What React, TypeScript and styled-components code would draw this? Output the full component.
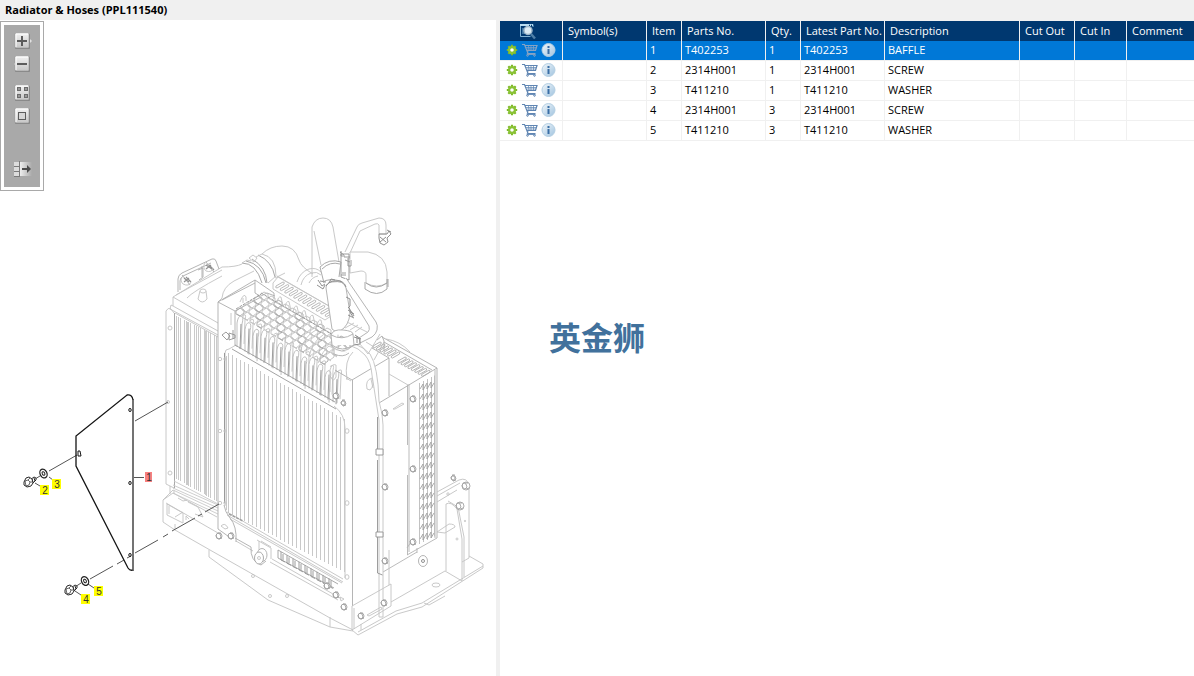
import React, { useState } from 'react';
import styled, { createGlobalStyle, css } from 'styled-components';

const GlobalStyle = createGlobalStyle`
  * { box-sizing: border-box; }
  body { margin: 0; background: #fff; }
`;

const Page = styled.div`
  position: relative;
  display: flex;
  flex-direction: column;
  min-height: 100vh;
  background: #fff;
  color: #000;
  font: 11px/16px 'Open Sans', 'Noto Sans', sans-serif;
`;

const TitleBar = styled.h1`
  margin: 0;
  height: 20px;
  padding: 0 5px;
  background: #f0f0f0;
  font-size: 11px;
  line-height: 20px;
  font-weight: 700;
  white-space: nowrap;
`;

const Split = styled.main`
  display: flex;
  flex: 1;
`;

const DrawingPane = styled.section`
  position: relative;
  flex: 496 1 0;
  min-width: 0;
`;

const Splitter = styled.div`
  flex: 0 0 4px;
  background: #f0f0f0;
`;

const ListPane = styled.section`
  flex: 694 1 0;
  min-width: 0;
  border-top: 1px solid #f0f0f0;
`;

/* Floating drawing tools */

const ToolBox = styled.div`
  position: absolute;
  top: 1px;
  left: 0;
  padding: 3px;
  border: 1px solid #a9a9a9;
  background: #fff;
`;

const ToolColumn = styled.div`
  display: flex;
  flex-direction: column;
  align-items: flex-start;
  width: 36px;
  padding: 8px 0 10px 10px;
  background: #a9a9a9;
`;

const ToolGroup = styled.div<{ $after?: number }>`
  display: flex;
  flex-direction: column;
  gap: 7px;
  margin-bottom: ${(p) => p.$after ?? 0}px;
`;

const IconButton = styled.button`
  display: flex;
  padding: 0;
  border: 0;
  background: none;
  cursor: pointer;
  svg { display: block; }
`;

/* Parts list */

const Table = styled.table`
  width: 100%;
  table-layout: fixed;
  border-collapse: separate;
  border-spacing: 0;
`;

const Col = styled.col<{ $w?: number }>`
  ${(p) => p.$w && css`width: ${p.$w}px;`}
`;

const HeadCell = styled.th`
  height: 20px;
  padding: 0 0 0 5px;
  border-right: 1px solid #f0f0f0;
  background: #003870;
  color: #fff;
  font-weight: 400;
  text-align: left;
  white-space: nowrap;
  overflow: hidden;
  &:last-child { border-right: 0; }
  svg { display: block; margin-left: 14px; }
`;

const Row = styled.tr<{ $selected: boolean }>`
  background: ${(p) => (p.$selected ? '#0078d7' : '#fff')};
  color: ${(p) => (p.$selected ? '#fff' : '#000')};
`;

const Cell = styled.td`
  height: 20px;
  padding: 0 0 2px 3px;
  border-right: 1px solid #f0f0f0;
  border-bottom: 1px solid #f0f0f0;
  white-space: nowrap;
  overflow: hidden;
  &:last-child { border-right: 0; }
`;

const Actions = styled.div`
  display: flex;
  align-items: center;
  gap: 3px;
  padding-left: 2px;
`;

const Brand = styled.div`
  position: absolute;
  top: 50%;
  left: 50%;
  transform: translate(-50%, -50%);
  padding-bottom: 4px;
  color: #41719c;
  font: 700 32px/32px 'Noto Sans CJK SC', sans-serif;
  white-space: nowrap;
  pointer-events: none;
`;

/* Icons */

const Tile = () => (
  <>
    <rect x="1" y="1" width="15" height="15" rx="1" fill="#868686" />
    <rect x="1" y="0" width="14" height="15" rx="1" fill="url(#tile)" stroke="#949494" strokeWidth="0.6" />
    <path d="M2 14V1h12" stroke="#fff" fill="none" />
  </>
);

const ZoomInIcon = () => (
  <svg width="18" height="16">
    <defs>
      <linearGradient id="tile" x1="0" y1="0" x2="0" y2="1">
        <stop offset="0" stopColor="#f2f2f2" />
        <stop offset="1" stopColor="#c6c6c6" />
      </linearGradient>
    </defs>
    <path d="M15 5l3 3-3 3z" fill="#e2e2e2" />
    <Tile />
    <path d="M8 3v10M3 8h10" stroke="#5c5c5c" strokeWidth="2" />
  </svg>
);

const ZoomOutIcon = () => (
  <svg width="18" height="16">
    <path d="M3 5L0 8l3 3z" fill="#e8e8e8" />
    <Tile />
    <path d="M3 8h10" stroke="#5c5c5c" strokeWidth="2" />
  </svg>
);

const TilesIcon = () => (
  <svg width="18" height="16">
    <Tile />
    {[[3.5, 2.5], [10.5, 2.5], [3.5, 9.5], [10.5, 9.5]].map(([x, y]) => (
      <rect key={`${x}-${y}`} x={x} y={y} width="3" height="3" fill="#999" stroke="#6c6c6c" />
    ))}
  </svg>
);

const FitIcon = () => (
  <svg width="18" height="16">
    <Tile />
    <rect x="4.5" y="4.5" width="7" height="7" fill="#d6d6d6" stroke="#5c5c5c" />
  </svg>
);

const TogglePanelIcon = () => (
  <svg width="18" height="16">
    <defs>
      <linearGradient id="fade">
        <stop offset="0" stopColor="#eee" />
        <stop offset="1" stopColor="#a9a9a9" />
      </linearGradient>
    </defs>
    <rect x="6" y="1" width="12" height="14" fill="url(#fade)" />
    <path d="M0 1h5v4H0zM0 6h5v4H0zM0 11h5v4H0z" fill="#dcdcdc" />
    <path d="M5.500 0v16M0 5.500h5M0 10.500h5M0 15.500h5" stroke="#7a7a7a" />
    <path d="M8 7h5V4l4 4-4 4V9H8z" fill="#4c4c4c" />
  </svg>
);

const GearIcon = () => (
  <svg width="13" height="16" viewBox="0 0 13 16">
    <g stroke="#7db928" strokeWidth="2.200">
      <path d="M7 2.800v10.400M1.800 8h10.400M3.300 4.300l7.400 7.400M10.700 4.300l-7.400 7.400" />
    </g>
    <circle cx="7" cy="8" r="3" fill="none" stroke="#8ac234" strokeWidth="2.200" />
    <circle cx="7" cy="8" r="1.800" fill="#fff" />
  </svg>
);

const CartIcon = ({ on }: { on: boolean }) => (
  <svg width="17" height="16" viewBox="0 0 17 16" fill="none" stroke={on ? '#86a3c4' : '#6086b3'}>
    <path d="M1 2.500h2.500L7 11.500h7.500M4 3.500h12L14.500 8.500H6" strokeWidth="1.200" />
    <path d="M5 5.500h10M6 7h9M7.500 4l.5 4.500M10 4v4.500M12.500 4v4.500" strokeWidth="0.9" opacity="0.8" />
    <path d="M7 9l-1 3.500h8.500" strokeWidth="0.9" />
    <circle cx="6.500" cy="13.500" r="0.8" />
    <circle cx="13.500" cy="13.500" r="0.8" />
  </svg>
);

const InfoIcon = () => (
  <svg width="15" height="16" viewBox="0 0 15 16">
    <defs>
      <linearGradient id="info" x1="0" y1="0" x2="1" y2="1">
        <stop offset="0" stopColor="#f2f7fb" />
        <stop offset="1" stopColor="#9fc3df" />
      </linearGradient>
    </defs>
    <circle cx="7.500" cy="8" r="6.500" fill="url(#info)" stroke="#b4cfe3" />
    <path d="M6.500 4h2v2h-2zM6.500 7h2v5h-2z" fill="#3a6ea5" />
  </svg>
);

const PreviewIcon = () => (
  <svg width="17" height="17" viewBox="0 0 17 17">
    <path d="M1.500 1v12.500h10M1 1.500h13V4" fill="none" stroke="#7fb2d4" />
    <path d="M1 2h13" stroke="#b9dcf0" strokeWidth="2" strokeDasharray="9 1 1 1" />
    <path d="M3 6h3M3 8h2M3 10h3" stroke="#7fb2d4" />
    <circle cx="9" cy="7.500" r="4" fill="#dcebf4" stroke="#9db6c8" strokeWidth="1.500" />
    <path d="M12 11l4 4.500" stroke="#4e7fa8" strokeWidth="2.500" />
  </svg>
);

/* Exploded view */

const range = (from: number, to: number, step: number) =>
  Array.from({ length: Math.floor((to - from) / step) + 1 }, (_, i) => from + i * step);

const Bolt = ({ x, y, r = 3 }: { x: number; y: number; r?: number }) => (
  <g stroke="#8c8c8c" fill="#fff" strokeWidth="0.9">
    <circle cx={x} cy={y} r={r} />
    <path d={`M${x - r} ${y - 1}l2-2 2 1 1 3-2 2-2-1zM${x - 1} ${y - 3}h3M${x} ${y + 3}l3-1`} fill="none" />
  </g>
);

const Callout = ({ x, y, n, fill = '#ffff00' }: { x: number; y: number; n: number; fill?: string }) => (
  <g>
    <rect x={x} y={y} width={n === 1 ? 7 : 9} height="10" fill={fill} shapeRendering="crispEdges" />
    <text x={x + (n === 1 ? 4 : 5)} y={y + 9} textAnchor="middle" fill="#333" fontFamily="Liberation Sans, sans-serif" fontSize="10">
      {n}
    </text>
  </g>
);

const Screw = ({ x, y }: { x: number; y: number }) => (
  <g stroke="#2a2a2a" fill="#fff">
    <path d={`M${x + 2} ${y - 2}l4-3 2 1v2l-4 4z`} />
    <path d={`M${x + 4} ${y - 3}l1 3M${x + 6} ${y - 4}l1 3`} />
    <path d={`M${x - 4} ${y}l2-4 3-1 3 2 1 4-2 3-4 1-3-2z`} />
    <path d={`M${x - 3} ${y - 1}l3-1 2 2-1 3-3 1zM${x} ${y - 2}l2-2M${x + 2} ${y}l2 0`} fill="none" strokeWidth="0.7" />
  </g>
);

const Washer = ({ x, y }: { x: number; y: number }) => (
  <g transform={`rotate(-25 ${x} ${y})`} stroke="#222" fill="#fff">
    <ellipse cx={x} cy={y} rx="3.400" ry="4.600" strokeWidth="1.300" />
    <ellipse cx={x} cy={y} rx="1.300" ry="1.900" />
  </g>
);

const vent = (x: number, y: number) => `M${x} ${y}l7-4q2 0 1 2l-7 4q-2 0-1-2`;

const RadiatorDrawing = styled.svg`
  display: block;
  width: 100%;
`;

const Drawing = () => (
  <RadiatorDrawing viewBox="0 20 496 656" preserveAspectRatio="xMinYMin meet" role="img" aria-label="Radiator and hoses exploded view">
    <g fill="none" stroke="#b4b4b4" strokeWidth="0.9" strokeLinejoin="round" opacity="0.8">
      {/* rear core and side strip */}
      <path d="M166 484V311q2-4 5-2l3 4M166 484l8 4M170 486v8" />
      <path d="M174.500 313v175" stroke="#888" />
      <circle cx="170" cy="328" r="2" />
      <circle cx="168" cy="402" r="1.500" />
      <circle cx="170" cy="473" r="2" />
      <g shapeRendering="crispEdges" stroke="#bebebe" strokeWidth="1">
        {range(176, 216, 2).filter((x) => x % 10 !== 2).map((x) => (
          <path key={x} d={`M${x + 0.5} ${Math.round(316 + (x - 176) * 0.5)}V${Math.round(479 + (x - 176) * 0.55)}`} />
        ))}
        {[187, 205].map((x) => (
          <path key={x} d={`M${x + 0.5} ${Math.round(316 + (x - 176) * 0.5)}V${Math.round(479 + (x - 176) * 0.55)}`} />
        ))}
      </g>
      {/* header tank */}
      <path d="M173 297v9l45 25M173 297l45 26M171 305l-1 4 48 26M173 306l-2-1M175 313l43 24" />
      <path d="M173 297l49-30q14 0 20-3M176 295l46-25M187 298q5-6 35-22M222 298q1-11 12-17l20-10M222 298l-4 4" />
      <path d="M178 292v-13q0-4 4-6l30-14q3-1 4 2l3 8M180 290v-9q0-3 3-5l28-13M202 266v11M182 275l8 10M206 262l8 10M198 270l5-2v9l-4 3" stroke="#999" />
      <path d="M184 278l5 4m-5 0l5-4m-3-1l5 5M206 265l6 4m-6 0l5-4m-2 0l5 5" stroke="#777" strokeWidth="1.200" />
      <path d="M183 276q-4 4 0 8 6 3 8-2M205 263q-3 4 1 8 6 2 7-3" />
      <path d="M200 291l-2 8q4 6 9 0l-1-8" fill="#fff" />
      <ellipse cx="203" cy="291" rx="3" ry="2" fill="#fff" />
      {/* inlet hose */}
      <path d="M242 263q14 0 20 20M246 261q16 3 20 22M252 259q14 8 15 24M258 255q14 6 17 22" stroke="#888" />
      <path d="M242 263l5-3 4 1M249 258l4-3 4 3-3 4zM256 257l6-3q14 3 14 22l-8 7" />
      <path d="M262 254q8-8 20-8 13 0 17 14 2 7 14 14M275 278l10-5M297 282q3-10 12-13 7-2 12 3M301 285q2-9 10-12 6-2 10 2M309 283q3-6 9-7" />
      <path d="M318 280l4 6 3-2M317 285l6 4 2-4M320 281l6 1" stroke="#666" />
      {/* front shroud upper frame */}
      <path d="M218 505V302l37-22 19 13v6M218 302l17 9v35M255 280v13l5 3M222 300l33-17M235 311l26-14M261 296l6-3 8 3" stroke="#989898" />
      <path d="M231 313v12M240 302q4-10 6-5v4M243 298v5" />
      <path d="M222 335l4-3 4 4-3 4zM229 333l6 2v3l-6 2zM233 330v9" stroke="#777" />
      {/* top cover with louvres */}
      <path d="M273 283l5-6 51 29M273 283v6l52 31M277 276l52 30M325 320l6-4M268 298l66 37" />
      {range(0, 11, 1).map((i) => (
        <path key={i} d={vent(276 + i * 4.5, 286 + i * 2.6)} stroke="#a0a0a0" />
      ))}
      {/* intercooler tube pattern */}
      {range(0, 4, 1).map((r) =>
        range(0, 12, 1).map((c) => (
          <path
            key={`${r}-${c}`}
            d={`M${236 + r * 6 + c * 7} ${311 - r * 4 + c * 4}l4-3 4 2v3l-4 3-4-2zm1 3l4 3`}
            stroke={(r + c) % 3 ? '#b0b0b0' : '#929292'}
          />
        )),
      )}
      <path d="M261 293l72 42M236 309l25-15" stroke="#777" strokeDasharray="3 1" />
      {range(0, 12, 1).map((i) => (
        <g key={i}>
          <path d={`M${237 + i * 8} ${347 + i * 4.6}v-${24 - (i % 3) * 2}q1-7 4-7 3 1 1 8l-1 ${24}`} fill="#fff" stroke="#a8a8a8" />
          <path d={`M${240 + i * 8} ${349 + i * 4.6}l1-25`} stroke="#757575" />
          <path d={`M${242 + i * 8} ${316 + i * 4.6}q5-4 3 4l-1 24`} />
        </g>
      ))}
      {range(0, 5, 1).map((i) => (
        <path key={i} d={`M${277 + i * 8} ${303 + i * 4.6}q1-7 4-6l2 9`} />
      ))}
      <path d="M300 352q4-16 16-22M309 357q3-15 14-22M318 363q5-13 11-17l6 3M330 392v-22q2-7 6-5v12q-3 6-5 0" />
      {/* front core */}
      <path d="M225 506V353q0-4 4-4l7-4" />
      <path d="M224.500 353v150" stroke="#777" />
      <path d="M235 345l100 57M232 349l104 60" stroke="#808080" />
      <path d="M334 406q11 8 11 22v150" />
      <path d="M352.500 380v226" stroke="#999" />
      <g shapeRendering="crispEdges" stroke="#bcbcbc" strokeWidth="1">
        {range(228, 344, 4).map((x) => (
          <path key={x} d={`M${x + 0.5} ${Math.round(353 + (x - 228) * 0.57)}V${Math.round(513 + (x - 228) * 0.51)}`} />
        ))}
        <path d="M226.500 356v154" />
      </g>
      {[431, 503, 577].map((y) => (
        <ellipse key={y} cx="347" cy={y} rx="2" ry="2.300" />
      ))}
      {[359, 431, 503].map((y) => (
        <g key={y}><circle cx="220" cy={y} r="1.700" /><circle cx="225" cy={y} r="1.200" /></g>
      ))}
      <path d="M227 512l116 67M227 515l116 67M230 519l112 64" />
      <path d="M229 514l14 7" stroke="#888" strokeWidth="1.500" strokeDasharray="3 1" />
      {/* lower teeth */}
      <path d="M278 550v8l56 30M278 550l60 34" stroke="#888" />
      {range(0, 8, 1).map((i) => (
        <path key={i} d={`M${281 + i * 6} ${552 + i * 3.3}v8l4 2M${283 + i * 6} ${554 + i * 3.3}v6`} stroke="#777" />
      ))}
      {/* base frame, left */}
      <path d="M173 490l-10 10v22l12 8 35 20 120 68 23 12M163 500l10-7 44 24M166 503l52 30M175 529v-5" />
      <path d="M167 504l16 9v10l-16-8zM169 506v8M175 517l8-5M186 520v-4l3 3M174 490v4M178 498l5 3 4-1M188 502l10 5 5 10-8-3" />
      <path d="M173 485l45 20M173 488l45 20M173 490l45 21M173 493l45 21M174 481l44 23" stroke="#bcbcbc" />
      <path d="M209 550v7l59 43 62 27 23 4M330 617v10M272 559l68 39M270 562l68 38M253 551l-17-10" />
      <circle cx="253" cy="576" r="1.500" /><circle cx="287" cy="596" r="1.500" /><circle cx="270" cy="596" r="1.500" />
      <path d="M218 505v24l14 10M224 505q1 7 6 13 7 8 6 24M235 538l16 9q-1 14 10 18l5-4" stroke="#999" />
      <path d="M259 541v10M257 540l14 8v11M261 541l10 6" />
      <ellipse cx="262" cy="555" rx="5" ry="6.500" fill="#fff" stroke="#999" />
      <ellipse cx="259" cy="558" rx="4.500" ry="6" fill="#fff" stroke="#8c8c8c" />
      <circle cx="259" cy="558" r="1.500" />
      <path d="M221 526q4-4 7 2l-3 1zM340 597l4 2-3 2z" />
      {/* right column and cover box */}
      <path d="M352 380l37-22v38M335 370l17 10M389 358l-17-10M377 340l5-4 2 5v10M382 337l55 31v170M437 368l-58 35M384 342l48 28" stroke="#989898" />
      <path d="M389 374l19 11M384 342l-10 18M386 339q14 2 24 13" />
      {range(0, 5, 1).map((i) => (
        <path key={i} d={vent(373 + i * 3.7, 346 + i * 2)} stroke="#999" />
      ))}
      {range(0, 7, 1).map((i) => (
        <path key={i} d={vent(398 + i * 3.4, 361 + i * 1.9)} stroke="#999" />
      ))}
      <path d="M407.500 385v60M407.500 475v80M409 384v168M407 555l30-17M407 548l4-6M417 553v-5M383 572l34-20M435 370v168" stroke="#a2a2a2" />
      {/* mesh guard */}
      {[419, 423, 427, 431, 434].map((x) => (
        <path key={x} d={`M${x + 0.5} ${383 - (x - 419) * 0.5}V${544 - (x - 419) * 0.5}`} stroke="#aaa" />
      ))}
      {range(0, 15, 1).map((i) => (
        <path
          key={i}
          d={`M420 ${389 + i * 10}l3-5v6l4-7v6l4-7v6l3-5`}
          stroke="#8c8c8c"
        />
      ))}
      <path d="M393 409l9-6 2 1-9 5zM367 389q-2-9 5-11 3 7-2 12zM371 379l2 9" />
      {/* vent tube down the column */}
      <path d="M349 345q10 3 16 10 6 7 7 20l7 45v197h4V425q0-10-4-24-1-35-9-47-5-6-15-10" fill="#fff" />
      <path d="M377.500 417v36M377.500 460v113M377.500 573l5 2" stroke="#777" />
      <path d="M376 449h7v6h-7zM376 532h7v5h-7z" fill="#fff" stroke="#777" />
      <path d="M347 380q-3-20 6-28M340 350l7 3M346 378l5 3" />
      {/* base, right */}
      <path d="M352 606l39-22v22l-39 24zM354 608v21M389 550v35M391 602l54-31 17 10M352 630l6 5 39-21 25-7 61-39v-4l-14-8M358 632l38-21 26-8 61-37M424 603l5 2 16-9M361 624v6M367 615l14-8 1 2-13 7z" />
      <path d="M446 504v67M446 504q5-3 11 5l5 30v42M448 501l10 6 6 30v40M469 485v73l-7 4M437 492l22-12q8-3 10 5M437 496l23-13M437 502l20-12M437 532l12-8q6 0 6 3l-10 6-8-1" />
      <circle cx="448" cy="494" r="1.200" /><circle cx="457" cy="539" r="1" />
      <circle cx="465" cy="521" r="0.700" />
      <ellipse cx="423" cy="561" rx="4.500" ry="5.500" stroke="#999" /><circle cx="423" cy="561" r="1.500" stroke="#666" />
      <ellipse cx="436" cy="585" rx="4" ry="2" />
      {[[385, 413], [413, 399], [413, 469], [385, 487], [413, 542], [385, 561], [384, 603], [361, 616], [344, 607], [336, 595], [327, 586], [336, 396], [343, 403], [219, 536], [231, 536], [466, 486], [460, 506], [453, 478]].map(([x, y]) => (
        <Bolt key={`${x}-${y}`} x={x} y={y} r={x > 459 ? 4 : x === 343 || x === 453 ? 2 : 3} />
      ))}
      {/* hoses above the tank */}
      <path d="M312 277v-50q3-9 11-9 8 0 10 9l6 35M314 231l7 34" />
      <path d="M345 252l12-25q1-3 5-4l17-5q7 0 7 7v9h-7v-9q-1-2-4-1l-15 7-10 22" fill="#fff" />
      <path d="M379 234h8l2-3 2 3-4 4 1 4-4 3-4-2-1-5zM380 237l6 5M386 237l-6 5M387 230l4 2" stroke="#666" />
      <path d="M350 252h18q18 3 19 20v11q-10 6-21 0v-8q0-4-5-4l-11 2z" fill="#fff" />
      <path d="M365 282v7q12 9 22 0v-10M366 283q10 8 21 0M388 279v8" stroke="#888" />
      <path d="M341 254v23l8 3v-26zM340 252l4 3M341 251v5h4M344 257h6M345 260l5 2M342 273h4M341 275h5M348 258v8h3v-6" fill="#fff" stroke="#777" />
      <path d="M320 267q9-9 21-5l-2 15M320 267l4 16M322 269q8-8 18-5M323 282q5-4 18-1l3 5" stroke="#888" />
      <path d="M346 278l30 44q2 3 1 8-1 4-5 7l-12 6-1-5 9-6q2-2 1-6l-27-44" fill="#fff" stroke="#989898" />
      <path d="M326 288q0-5 6-6 12-2 14 6l4 25q-1 13-10 18-5 2-8-2z" fill="#fff" stroke="#999" />
      <path d="M326 286q3-5 9-5 9-1 11 6M329 283l2-4 4 1" stroke="#666" />
      <path d="M346 297l4 2v7l-2 2M349 308l5 8M350 312l3 5M348 310l6 4M348 315l6 3" stroke="#666" />
      <path d="M345 328l9-5M350 330l8-5M355 332l7-5M347 322l20 10" />
      <path d="M331 335q11 6 22-1l1 11q-12 8-22 0zM331 335q2-6 12-5 10 1 10 4M331 345q10 12 23 0M334 349v5q9 4 15-1" fill="#fff" stroke="#999" />
      <path d="M354 337l6 2v5l-6 1M355 335l6 4M357 336v7" stroke="#666" />
      <path d="M360 344l8 10 12-20M366 342l8 5" />
    </g>

    {/* baffle and its fixings */}
    <g fill="none" stroke="#555" strokeWidth="1">
      <path d="M135 421l33-19M49 471l28-16M35 479l5-3M35 483l5 3M49 477l4 3" />
      <path d="M90 579l23-13M117 564l7-4M127 558l4-2M135 553l23-13M163 537l5-3M172 531l23-13M198 516l4-2M205 512l14-8M75 587l6-4M75 591l6 4M88 584l6 4M134 477.500h10" />
    </g>
    <g fill="none" stroke="#151515" strokeWidth="1.300">
      <path d="M133 400q-1-6-6-5L76 436v30l52 102q2 3 5 2" />
      <path d="M133 399v172" stroke="#444" strokeWidth="1.500" />
      <path d="M78 451h2l1 5h-3z" fill="#fff" strokeWidth="1" />
      {[410, 483, 555].map((y) => (
        <ellipse key={y} cx="130" cy={y} rx="1.200" ry="1.600" strokeWidth="1" />
      ))}
    </g>
    <Screw x={28} y={482} />
    <Washer x={43.5} y={473.5} />
    <Screw x={69} y={590} />
    <Washer x={85} y={581} />
    <Callout n={1} x={145} y={472} fill="#f88080" />
    <Callout n={2} x={40} y={485} />
    <Callout n={3} x={52} y={479} />
    <Callout n={4} x={81} y={594} />
    <Callout n={5} x={94} y={586} />
  </RadiatorDrawing>
);

const COLUMNS: { label: string; width?: number }[] = [
  { label: 'Symbol(s)', width: 84 },
  { label: 'Item', width: 35 },
  { label: 'Parts No.', width: 84 },
  { label: 'Qty.', width: 35 },
  { label: 'Latest Part No.', width: 84 },
  { label: 'Description', width: 135 },
  { label: 'Cut Out', width: 55 },
  { label: 'Cut In', width: 52 },
  { label: 'Comment' },
];

const PARTS = [
  { item: 1, part: 'T402253', qty: 1, description: 'BAFFLE' },
  { item: 2, part: '2314H001', qty: 1, description: 'SCREW' },
  { item: 3, part: 'T411210', qty: 1, description: 'WASHER' },
  { item: 4, part: '2314H001', qty: 3, description: 'SCREW' },
  { item: 5, part: 'T411210', qty: 3, description: 'WASHER' },
];

export default function App() {
  const [selected, setSelected] = useState(1);
  return (
    <Page>
      <GlobalStyle />
      <TitleBar>Radiator &amp; Hoses (PPL111540)</TitleBar>
      <Split>
        <DrawingPane>
          <Drawing />
          <ToolBox role="toolbar" aria-label="Drawing tools">
            <ToolColumn>
              <ToolGroup $after={13}>
                <IconButton aria-label="Zoom in"><ZoomInIcon /></IconButton>
                <IconButton aria-label="Zoom out"><ZoomOutIcon /></IconButton>
              </ToolGroup>
              <ToolGroup $after={37}>
                <IconButton aria-label="Show all"><TilesIcon /></IconButton>
                <IconButton aria-label="Fit"><FitIcon /></IconButton>
              </ToolGroup>
              <ToolGroup>
                <IconButton aria-label="Toggle list"><TogglePanelIcon /></IconButton>
              </ToolGroup>
            </ToolColumn>
          </ToolBox>
        </DrawingPane>
        <Splitter />
        <ListPane>
          <Table>
            <colgroup>
              <Col $w={63} />
              {COLUMNS.map((c) => <Col key={c.label} $w={c.width} />)}
            </colgroup>
            <thead>
              <tr>
                <HeadCell aria-label="Actions"><PreviewIcon /></HeadCell>
                {COLUMNS.map((c) => <HeadCell key={c.label}>{c.label}</HeadCell>)}
              </tr>
            </thead>
            <tbody>
              {PARTS.map((p) => (
                <Row key={p.item} $selected={p.item === selected} onClick={() => setSelected(p.item)}>
                  <Cell>
                    <Actions>
                      <IconButton aria-label="Options"><GearIcon /></IconButton>
                      <IconButton aria-label="Add to cart"><CartIcon on={p.item === selected} /></IconButton>
                      <IconButton aria-label="Part information"><InfoIcon /></IconButton>
                    </Actions>
                  </Cell>
                  <Cell />
                  <Cell>{p.item}</Cell>
                  <Cell>{p.part}</Cell>
                  <Cell>{p.qty}</Cell>
                  <Cell>{p.part}</Cell>
                  <Cell>{p.description}</Cell>
                  <Cell />
                  <Cell />
                  <Cell />
                </Row>
              ))}
            </tbody>
          </Table>
        </ListPane>
      </Split>
      <Brand>英金狮</Brand>
    </Page>
  );
}
